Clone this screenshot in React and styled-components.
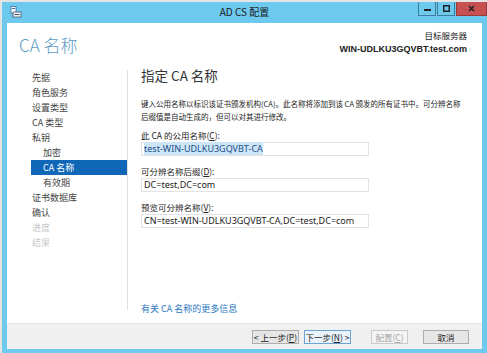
import styled, { createGlobalStyle } from "styled-components";

const GlobalStyle = createGlobalStyle`
  body {
    margin: 0;
    background: #e4e4e4;
    font-family: "Noto Sans CJK SC", "Noto Sans", sans-serif;
    color: #222;
  }
`

const Window = styled.div`
  margin: 2px 0 0 2px;
  width: 485px;
  height: 351px;
  background: #6dc9ee;
  display: flex;
  flex-direction: column;
  padding: 0 5px 4px 5px;
  box-sizing: border-box;
`

const TitleBar = styled.div`
  height: 21px;
  display: flex;
  align-items: flex-start;
  position: relative;
`

const AppIcon = styled.svg`
  margin: 4px 0 0 3px;
`

const Title = styled.div`
  position: absolute;
  left: 0;
  right: 0;
  top: 3px;
  text-align: center;
  font-size: 10px;
  line-height: 14px;
  color: #1a1a1a;
`

const Controls = styled.div`
  margin-left: auto;
  margin-right: -5px;
  display: flex;
  gap: 1px;
`

const CtrlButton = styled.div`
  width: ${p => p.wide ? 29 : 16}px;
  height: 13px;
  background: ${p => p.close ? "#c75050" : "#6dc9ee"};
  border: 1px solid ${p => p.close ? "#9a3b3b" : "#3b7d9b"};
  border-top: none;
  display: flex;
  align-items: center;
  justify-content: center;
`

const Client = styled.div`
  flex: 1;
  background: #fff;
  display: flex;
  flex-direction: column;
`

const Header = styled.div`
  height: 40px;
  display: flex;
  justify-content: space-between;
  padding: 0 15px 0 12px;
`

const PageTitle = styled.div`
  font-size: 17px;
  line-height: 20px;
  margin-top: 12px;
  color: #5b9cc4;
  font-weight: 300;
  font-family: "Noto Sans CJK SC", "Open Sans", sans-serif;
`

const Target = styled.div`
  text-align: right;
  font-size: 8.5px;
  line-height: 13px;
  margin-top: 6px;
  color: #222;
  b {
    font-family: "Liberation Sans", sans-serif;
    font-weight: bold;
    font-size: 9px;
  }
`

const Body = styled.div`
  flex: 1;
  display: flex;
`

const Nav = styled.div`
  width: 96px;
  margin: 7px 0 13px 24px;
  border-right: 1px solid #e0e0e0;
  display: flex;
  flex-direction: column;
`

const NavItem = styled.div`
  height: 15px;
  line-height: 15px;
  font-size: 9px;
  padding-left: ${p => p.sub ? 12 : 1}px;
  color: ${p => p.selected ? "#fff" : p.disabled ? "#c8c8c8" : "#444"};
  background: ${p => p.selected ? "#1067b8" : "transparent"};
`

const Content = styled.div`
  flex: 1;
  padding: 3px 0 0 13px;
  display: flex;
  flex-direction: column;
`

const Heading = styled.div`
  font-size: 13.5px;
  line-height: 18px;
  color: #333;
  margin-bottom: 13px;
`

const Desc = styled.div`
  font-size: 7.5px;
  line-height: 13px;
  color: #222;
  white-space: nowrap;
  margin-bottom: 6px;
`

const Label = styled.div`
  font-size: 8.5px;
  line-height: 13px;
  color: #222;
  u { text-decoration: underline; }
`

const Field = styled.div`
  width: 228px;
  height: 14px;
  box-sizing: border-box;
  border: 1px solid #e2e2e2;
  font-size: 9px;
  line-height: 12px;
  padding-left: 2px;
  margin: 0 0 9px;
  color: #222;
  font-family: "Noto Sans", sans-serif;
`

const Selected = styled.span`
  background: #cde6f7;
  color: #1c4f8a;
`

const MoreLink = styled.div`
  margin-top: auto;
  font-size: 9px;
  line-height: 13px;
  color: #2a78c2;
  padding-bottom: 8px;
`

const Footer = styled.div`
  height: 26px;
  background: #f0f0f0;
  border-top: 1px solid #e6e6e6;
  box-sizing: border-box;
  display: flex;
  align-items: center;
  padding: 0 13px 0 0;
  justify-content: flex-end;
`

const Button = styled.div`
  width: ${p => p.w}px;
  height: 14px;
  margin-left: ${p => p.gap}px;
  box-sizing: border-box;
  border: 1px solid ${p => p.focused ? "#6aa5d6" : p.disabled ? "#c9c9c9" : "#adadad"};
  background: ${p => p.focused ? "#eaf3fb" : p.disabled ? "#f4f4f4" : "#e6e6e6"};
  color: ${p => p.disabled ? "#a8a8a8" : "#222"};
  font-size: 8.5px;
  line-height: 12px;
  text-align: center;
  white-space: nowrap;
  u { text-decoration: underline; }
`

const navItems = [
  { t: "先据" },
  { t: "角色服务" },
  { t: "设置类型" },
  { t: "CA 类型" },
  { t: "私钥" },
  { t: "加密", sub: true },
  { t: "CA 名称", sub: true, selected: true },
  { t: "有效期", sub: true },
  { t: "证书数据库" },
  { t: "确认" },
  { t: "进度", disabled: true },
  { t: "结果", disabled: true },
]

function App() {
  return (
    <Window>
      <GlobalStyle />
      <TitleBar>
        <AppIcon width="12" height="12" viewBox="0 0 12 12">
          <rect x="1" y="0.5" width="5" height="7" fill="#fff" stroke="#3a6e9e" strokeWidth="0.8" />
          <rect x="2" y="2" width="3" height="1" fill="#3a6e9e" />
          <rect x="3" y="6" width="8" height="5" fill="#e8eef4" stroke="#4a5a6a" strokeWidth="0.8" />
          <rect x="4.5" y="8" width="5" height="1" fill="#4a5a6a" />
        </AppIcon>
        <Title>AD CS 配置</Title>
        <Controls>
          <CtrlButton>
            <svg width="7" height="7" viewBox="0 0 7 7"><rect x="0" y="4" width="7" height="2" fill="#222" /></svg>
          </CtrlButton>
          <CtrlButton>
            <svg width="7" height="7" viewBox="0 0 7 7"><rect x="0.75" y="0.75" width="5.5" height="5.5" fill="none" stroke="#222" strokeWidth="1.5" /></svg>
          </CtrlButton>
          <CtrlButton wide close>
            <svg width="7" height="7" viewBox="0 0 7 7"><path d="M1 1 L6 6 M6 1 L1 6" stroke="#222" strokeWidth="1.6" /></svg>
          </CtrlButton>
        </Controls>
      </TitleBar>
      <Client>
        <Header>
          <PageTitle>CA 名称</PageTitle>
          <Target>
            目标服务器<br />
            <b>WIN-UDLKU3GQVBT.test.com</b>
          </Target>
        </Header>
        <Body>
          <Nav>
            {navItems.map(n => (
              <NavItem key={n.t} sub={n.sub} selected={n.selected} disabled={n.disabled}>{n.t}</NavItem>
            ))}
          </Nav>
          <Content>
            <Heading>指定 CA 名称</Heading>
            <Desc>
              键入公用名称以标识该证书颁发机构(CA)。此名称将添加到该 CA 颁发的所有证书中。可分辨名称<br />
              后缀值是自动生成的，但可以对其进行修改。
            </Desc>
            <Label>此 CA 的公用名称(<u>C</u>):</Label>
            <Field><Selected>test-WIN-UDLKU3GQVBT-CA</Selected></Field>
            <Label>可分辨名称后缀(<u>D</u>):</Label>
            <Field>DC=test,DC=com</Field>
            <Label>预览可分辨名称(<u>V</u>):</Label>
            <Field>CN=test-WIN-UDLKU3GQVBT-CA,DC=test,DC=com</Field>
            <MoreLink>有关 CA 名称的更多信息</MoreLink>
          </Content>
        </Body>
        <Footer>
          <Button w={47} gap={0}>&lt; 上一步(<u>P</u>)</Button>
          <Button w={47} gap={5} focused>下一步(<u>N</u>) &gt;</Button>
          <Button w={37} gap={20} disabled>配置(<u>C</u>)</Button>
          <Button w={46} gap={15}>取消</Button>
        </Footer>
      </Client>
    </Window>
  );
}

export default App;
